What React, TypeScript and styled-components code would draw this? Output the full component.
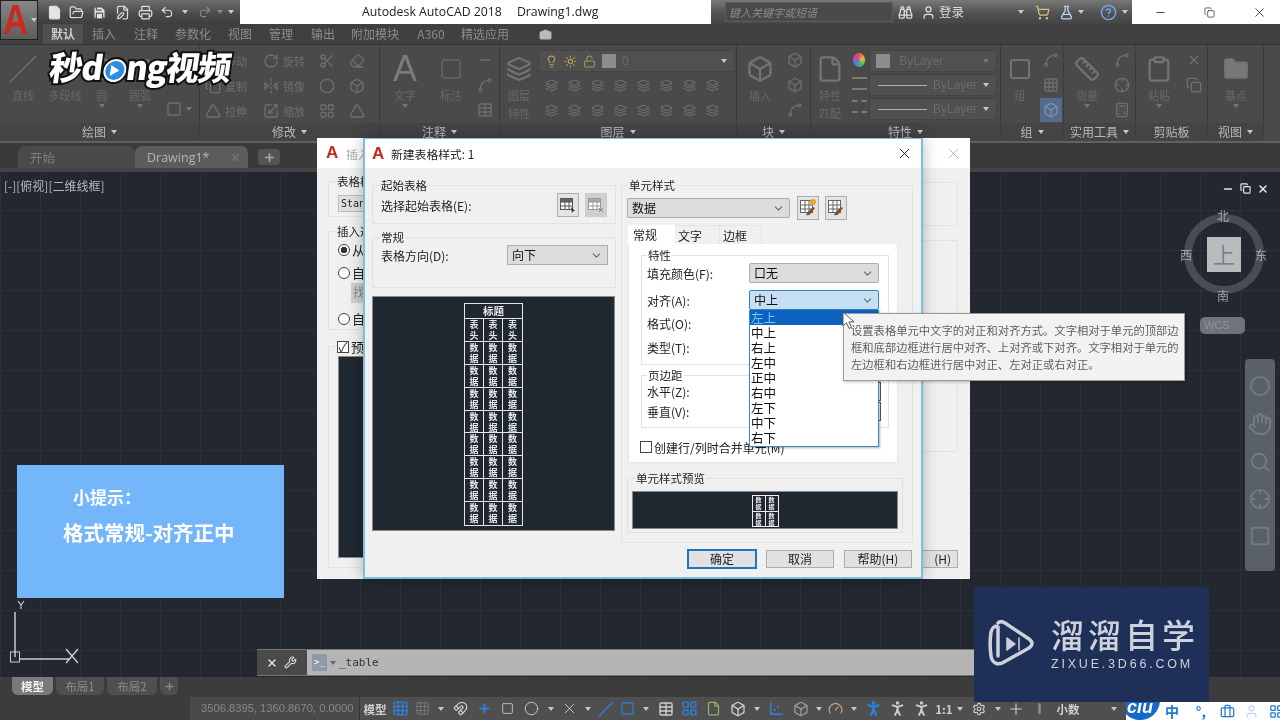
import React from 'react';
import styled, { createGlobalStyle } from 'styled-components';
import {
  File, FolderOpen, Save, FilePen, Printer, Undo2, Redo2, Binoculars, User, ShoppingCart, FlaskConical, CircleHelp,
  Minus, Copy, X, Plus, Camera, Move, RotateCw, Scissors, Eraser, FlipHorizontal2, Scaling, LayoutGrid, Triangle,
  Layers, Lightbulb, Sun, LockOpen, Square, Table, Box, Settings, Hand, Search, Wrench, Circle, Spline, Grid3x3,
  Magnet, Gauge, Axis3d, PersonStanding, Briefcase, Clipboard, Folder, Ruler, Crosshair, Calculator, Slash, ChevronDown,
} from 'lucide-react';

const CJK = `"Noto Sans CJK SC", "Liberation Sans", sans-serif`;
const Global = createGlobalStyle`
  html, body { margin: 0; padding: 0; background: #222730; }
  * { box-sizing: border-box; }
`;

const Screen = styled.div`
  position: relative; width: 1280px; height: 720px; overflow: hidden; display: flex; flex-direction: column;
  background: #3c3c3c; font-family: ${CJK}; filter: blur(0.35px);
`;

/* ---------- title bar ---------- */
const TitleBar = styled.div`display: flex; height: 24px; background: #fff; flex: none;`;
const Qat = styled.div`
  width: 240px; display: flex; align-items: center; padding-left: 43px;
  background: linear-gradient(#6d6d6d, #4a4a4a 60%, #3e3e3e); color: #dcdcdc;
`;
const QatSlot = styled.span<{ $w: number }>`width: ${p => p.$w}px; flex: none; display: flex; justify-content: center; align-items: center;`;
const Arrow = styled.span<{ $c?: string }>`
  display: inline-block; width: 0; height: 0; border-left: 3px solid transparent; border-right: 3px solid transparent;
  border-top: 4px solid ${p => p.$c || '#c9c9c9'};
`;
const AppButton = styled.div`
  position: absolute; left: 0; top: 0; width: 38px; height: 40px; z-index: 3; overflow: hidden;
  background: linear-gradient(#868686, #5d5d5d); border: 1px solid #222; display: flex; align-items: center; padding-left: 2px; gap: 1px;
`;
const AppLetter = styled.span`font: 700 42px/40px "Liberation Sans", sans-serif; color: #c92a1e; transform: scaleX(0.82); transform-origin: left; width: 27px;`;
const DocTitle = styled.div`
  width: 471px; padding-left: 122px; display: flex; gap: 15px; font: 12.3px/24px "Open Sans", ${CJK}; color: #222; white-space: nowrap;
`;
const SearchZone = styled.div`
  width: 421px; display: flex; align-items: center; color: #ddd; font-size: 12px;
  background: linear-gradient(#777, #525252 55%, #444);
`;
const SearchField = styled.div`
  margin-left: 14px; width: 168px; flex: none; height: 20px; background: #4a4a4a; color: #8b8b8b; font: italic 11px/18px ${CJK}; padding-left: 3px;
  border: 1px solid #5d5d5d; white-space: nowrap; overflow: hidden;
`;
const LoginText = styled.span`color: #dadada; font-size: 12.5px; line-height: 24px; width: 26px; flex: none; white-space: nowrap;`;
const WinControls = styled.div`flex: 1; display: flex; color: #222;`;
const WinBtn = styled.span`flex: 1; display: flex; align-items: center; justify-content: center; padding-left: 8px;`;

/* ---------- ribbon ---------- */
const RibbonTabs = styled.div`height: 20px; flex: none; background: #404040; display: flex; padding-left: 43px; color: #8d8d8d; font-size: 12px; line-height: 20px;`;
const RibbonTab = styled.span<{ $w: number; $on?: boolean }>`
  width: ${p => p.$w}px; flex: none; text-align: center; white-space: nowrap;
  ${p => p.$on ? 'background:#505050;color:#cdcdcd;font-weight:700;' : ''}
`;
const Ribbon = styled.div`height: 99px; flex: none; display: flex; background: #4a4a4a; border-bottom: 2px solid #616161; border-top: 1px solid #333;`;
const Panel = styled.div<{ $w: number }>`
  width: ${p => p.$w}px; flex: none; display: flex; flex-direction: column; border-right: 1px solid #3c3c3c; color: #6e6e6e;
`;
const PanelBody = styled.div`height: 78px; display: flex; flex: none;`;
const PanelFoot = styled.div`
  flex: 1; background: #444; color: #b9b9b9; font-size: 12px; display: flex; align-items: center; justify-content: center; gap: 5px; line-height: 18px;
`;
const BigBox = styled.div<{ $w: number }>`
  width: ${p => p.$w}px; flex: none; display: flex; flex-direction: column; align-items: center; padding-top: 8px; font-size: 11px; line-height: 18px; color: #696969;
`;
const BigIcon = styled.div`height: 31px; display: flex; align-items: center; justify-content: center; margin-bottom: 2px; color: #737373;`;
const BigLetter = styled.span`font: 36px/31px "Liberation Sans", sans-serif; color: #7b7b7b;`;
const Stack = styled.div<{ $w: number; $pt?: number }>`
  width: ${p => p.$w}px; flex: none; display: flex; flex-direction: column; align-items: center; gap: 7px; padding-top: ${p => p.$pt ?? 6}px; color: #6f6f6f;
`;
const Cell18 = styled.span<{ $on?: boolean }>`
  height: 18px; display: flex; align-items: center; gap: 4px; font-size: 11px; white-space: nowrap;
  ${p => p.$on ? 'background:#566b8c;outline:3px solid #566b8c;color:#7e90ab;' : ''}
`;
const ToolGrid = styled.div<{ $c: string }>`display: grid; grid-template-columns: ${p => p.$c}; grid-auto-rows: 25px; padding-top: 3px; align-items: center; justify-items: start; color: #6f6f6f; padding-left: 5px;`;
const LayerSide = styled.div`flex: 1; display: flex; flex-direction: column; padding-top: 5px;`;
const RibbonCombo = styled.div<{ $w?: number }>`
  width: ${p => p.$w ? p.$w + 'px' : '100%'}; height: 22px; background: #505050; border: 1px solid #454545; display: flex; align-items: center; gap: 6px;
  padding: 0 7px 0 6px; font-size: 12px; color: #6b6b6b; font-family: "Liberation Sans", sans-serif;
`;
const ColorCell = styled.span`width: 14px; height: 14px; background: #8d8d8d; flex: none;`;
const ComboEnd = styled.span`margin-left: auto; display: flex;`;
const LineSample = styled.span`flex: 1; height: 1px; background: #b0b0b0; max-width: 58px; margin-left: 2px;`;
const IconRow = styled.div`display: flex; padding-left: 2px; gap: 0; color: #6f6f6f; height: 24px; margin-top: 1px; align-items: center;`;
const Slot23 = styled.span`width: 23px; display: flex; justify-content: center;`;
const Wheel = styled.span`width: 12px; height: 14px; border-radius: 50%; background: conic-gradient(#e35151, #e8c13a, #4cc25c, #4a7fd8, #b04ccc, #e35151);`;
const LinesGlyph = styled.span<{ $dash?: boolean }>`
  width: 15px; height: 13px; border-top: 2px ${p => p.$dash ? 'dashed' : 'solid'} #7a7a7a; border-bottom: 2px ${p => p.$dash ? 'dashed' : 'solid'} #7a7a7a;
  position: relative; display: block;
`;
const PropCol = styled.div`width: 128px; display: flex; flex-direction: column; gap: 2px; padding-top: 5px;`;
const SwatchCol = styled.div`width: 20px; display: flex; flex-direction: column; align-items: center; gap: 10px; padding-top: 8px;`;

/* ---------- file tabs ---------- */
const FileTabs = styled.div`height: 29px; flex: none; background: #3a3a3a; display: flex; align-items: flex-end; padding-left: 18px; border-bottom: 4px solid #444;`;
const FileTab = styled.div<{ $w: number; $on?: boolean }>`
  width: ${p => p.$w}px; height: 22px; border-radius: 7px 7px 0 0; display: flex; align-items: center; justify-content: space-between;
  padding: 0 7px 0 12px; font: 12.5px "Open Sans", ${CJK}; color: ${p => p.$on ? '#b5b5b5' : '#7f7f7f'};
  background: ${p => p.$on ? '#5c5c5c' : '#4a4a4a'};
`;
const AddTab = styled.div`width: 22px; height: 16px; margin: 0 0 3px 10px; border-radius: 4px; background: #555; color: #aaa; display: flex; align-items: center; justify-content: center;`;

/* ---------- canvas ---------- */
const Canvas = styled.div`
  position: relative; flex: 1; background-color: #222730;
  background-image:
    linear-gradient(#2c323b 1px, transparent 1px), linear-gradient(90deg, #2c323b 1px, transparent 1px);
  background-size: 40px 40px; background-position: 0 -2px;
`;
const ViewLabel = styled.div`position: absolute; left: 4px; top: 6px; font-size: 12px; line-height: 16px; color: #b5b9bf;`;
const VpControls = styled.div`position: absolute; left: 1222px; top: 11px; display: flex; gap: 6px; color: #e8e8e8;`;
const CubeRing = styled.div`position: absolute; left: 1184px; top: 42px; width: 80px; height: 80px; border-radius: 50%; border: 8px solid #474c55;`;
const CubeFace = styled.div`
  position: absolute; left: 1207px; top: 65px; width: 34px; height: 35px; background: #b9bcbf; color: #7e8287;
  font-size: 22px; line-height: 33px; text-align: center;
`;
const Compass = styled.span<{ $x: number; $y: number }>`position: absolute; left: ${p => p.$x}px; top: ${p => p.$y}px; font-size: 12px; line-height: 14px; color: #a2a6ac;`;
const WcsPill = styled.div`
  position: absolute; left: 1200px; top: 145px; width: 45px; height: 17px; border-radius: 5px; background: #6e737c; color: #8f949c;
  font: 11px/17px "Liberation Sans", sans-serif; padding-left: 4px;
`;
const NavBar = styled.div`
  position: absolute; left: 1245px; top: 187px; width: 30px; height: 212px; background: #5a606a; border-radius: 4px; color: #747a84;
  display: flex; flex-direction: column; align-items: center; gap: 15px; padding-top: 16px;
`;
const Hint = styled.div`
  position: absolute; left: 17px; top: 293px; width: 267px; height: 133px; background: #73b6fa; color: #fff; font-weight: 700;
  display: flex; flex-direction: column; font-family: "Noto Sans CJK SC", serif;
`;
const HintSmall = styled.div`margin: 20px 0 0 56px; font-size: 17px; line-height: 24px;`;
const HintBig = styled.div`margin: 11px 0 0 46px; font-size: 20.5px; line-height: 24px; white-space: nowrap;`;
const Ucs = styled.svg`position: absolute; left: 8px; top: 425px;`;
const CmdLine = styled.div`
  position: absolute; left: 257px; top: 477px; width: 740px; height: 27px; display: flex; border-top: 1px solid #777; border-bottom: 1px solid #777;
`;
const CmdTools = styled.div`width: 50px; background: #4a4a4a; display: flex; align-items: center; padding-left: 9px; gap: 6px; color: #ddd;`;
const CmdField = styled.div`flex: 1; background: #b5b5b5; display: flex; align-items: center; padding-left: 5px; gap: 3px; color: #333; font: 11px "DejaVu Sans Mono", monospace;`;
const CmdPrompt = styled.span`width: 15px; height: 17px; background: #8f9aa8; color: #fff; font-size: 9px; line-height: 16px; text-align: center;`;

/* ---------- bottom ---------- */
const LayoutTabs = styled.div`height: 20px; flex: none; background: #3c3c3c; display: flex; padding-left: 12px; gap: 3px; font-size: 11.5px;`;
const LayoutTab = styled.div<{ $w: number; $on?: boolean }>`
  width: ${p => p.$w}px; height: 18px; display: flex; justify-content: center; align-items: center; border-radius: 0 0 6px 6px;
  background: ${p => p.$on ? '#7a7a7a' : '#4f4f4f'}; color: ${p => p.$on ? '#f0f0f0' : '#8c8c8c'}; font-weight: ${p => p.$on ? 700 : 400};
`;
const StatusBar = styled.div`height: 23px; flex: none; display: flex; padding-left: 190px; background: #3c3c3c;`;
const Coords = styled.div`width: 172px; background: #4a4a4a; color: #888; font: 11.2px/23px "Liberation Sans", sans-serif; padding-left: 11px; white-space: nowrap; border-right: 1px solid #333;`;
const StatusCluster = styled.div`flex: 1; display: flex; align-items: center; background: #4f4f4f; height: 100%;`;
const StatusItem = styled.span<{ $w: number; $c?: string }>`
  width: ${p => p.$w}px; flex: none; display: flex; align-items: center; justify-content: center; color: ${p => p.$c || '#cfcfcf'}; font-size: 11.5px; font-weight: 700; white-space: nowrap;
`;
const Tray = styled.div`width: 156px; background: #fff; margin-top: 5px; height: 18px; overflow: hidden; display: flex; align-items: center; color: #1e78d8;`;
const TrayBadge = styled.span`
  width: 40px; height: 40px; margin: -22px 0 0 -6px; align-self: flex-start; flex: none; border-radius: 50%; background: #1668c9; color: #fff; font: italic 700 18px/54px "Liberation Sans", sans-serif; text-align: center;
`;
const TrayText = styled.span<{ $w: number }>`width: ${p => p.$w}px; flex: none; display: flex; justify-content: center; font-weight: 700; font-size: 14px; line-height: 18px;`;

/* ---------- dialogs ---------- */
const Dialog = styled.div<{ $x: number; $w: number; $front?: boolean }>`
  position: absolute; left: ${p => p.$x}px; top: 138px; width: ${p => p.$w}px; height: 441px; background: #f0f0f0; display: flex; flex-direction: column;
  color: #222; font-size: 12px;
  ${p => p.$front ? 'border:2px solid #7fbddc; border-top-width:1px; box-shadow:0 0 14px rgba(0,0,0,.28);' : ''}
`;
const DlgTitle = styled.div<{ $dim?: boolean }>`
  height: ${p => p.$dim ? 30 : 29}px; flex: none; background: #fff; display: flex; align-items: center; padding: ${p => p.$dim ? '0 8px 0 9px' : '0 8px 0 7px'}; gap: ${p => p.$dim ? 5 : 4}px; font-size: 11.8px; color: ${p => p.$dim ? '#aaa' : '#222'};
`;
const DlgLogo = styled.span`font: 700 17px/20px "Liberation Sans", sans-serif; color: #c8281e; width: 15px;`;
const DlgClose = styled.span<{ $dim?: boolean }>`margin-left: auto; display: flex; color: ${p => p.$dim ? '#aaa' : '#222'};`;
const DlgBody = styled.div`display: flex; flex: none; justify-content: space-between;`;
const Field = styled.fieldset<{ $w?: number; $h: number; $ml?: number; $mt?: number; $pad?: string }>`
  margin: ${p => p.$mt ?? 0}px 0 0 ${p => p.$ml ?? 0}px; padding: ${p => p.$pad || '0'}; min-width: 0; flex: none;
  width: ${p => p.$w ? p.$w + 'px' : 'auto'}; height: ${p => p.$h}px; border: 1px solid #e1e1e1; display: block;
`;
const Legend = styled.legend<{ $ml?: number }>`padding: 0 1px; margin-left: ${p => p.$ml ?? 5}px; font-size: 11.5px; line-height: 14px; height: 14px; color: #222; white-space: nowrap;`;
const Col = styled.div<{ $w: number; $ml?: number; $mr?: number }>`width: ${p => p.$w}px; flex: none; margin: 0 ${p => p.$mr ?? 0}px 0 ${p => p.$ml ?? 0}px; display: flex; flex-direction: column;`;
const Row = styled.div<{ $h?: number; $mb?: number; $mt?: number; $start?: boolean }>`
  display: flex; align-items: center; justify-content: ${p => p.$start ? 'flex-start' : 'space-between'}; gap: ${p => p.$start ? 7 : 0}px;
  height: ${p => p.$h ?? 24}px; margin: ${p => p.$mt ?? 0}px 0 ${p => p.$mb ?? 0}px; white-space: nowrap;
`;
const IconBtns = styled.div`display: flex; gap: 6px;`;
const IconBtn = styled.span<{ $dim?: boolean }>`
  width: 22px; height: 24px; border: 1px solid ${p => p.$dim ? '#ccc' : '#adadad'}; background: ${p => p.$dim ? '#cfcfcf' : '#e4e4e4'};
  display: flex; align-items: center; justify-content: center;
`;
const SelectWrap = styled.div<{ $w: number }>`position: relative; width: ${p => p.$w}px; flex: none;`;
const Select = styled.div<{ $open?: boolean; $flat?: boolean }>`
  height: 20px; display: flex; align-items: center; justify-content: space-between; padding: 0 4px; line-height: 18px; color: #111;
  background: ${p => p.$open ? '#c6dff2' : '#dcdcdc'}; border: 1px solid ${p => p.$open ? '#2f84c6' : '#adadad'};
  border-radius: ${p => p.$flat ? 0 : 2}px;
`;
const MarginInput = styled.div`width: 132px; height: 19px; margin-right: -2px; border: 1px solid #555; border-left: none; background: #fff; flex: none;`;
const Tabs = styled.div`display: flex; margin: 5px 0 0 1px; height: 19px; position: relative;`;
const Tab = styled.span<{ $w: number; $on?: boolean }>`
  width: ${p => p.$w}px; padding-left: ${p => p.$on ? 5 : 3}px; line-height: 19px; background: ${p => p.$on ? '#fff' : '#f0f0f0'};
  ${p => p.$on ? '' : 'border:1px solid #e4e4e4; border-bottom:none; border-left:none;'}
`;
const TabBody = styled.div`
  width: 270px; height: 219px; margin-left: 1px; background: #fff; display: flex; flex-direction: column; padding: 4px 0 0 12px; border: 1px solid #e6e6e6; border-top: none;
`;
const FormPad = styled.div`padding: 0 9px 0 5px;`;
const Preview = styled.div<{ $h: number; $w?: number; $mt?: number }>`
  height: ${p => p.$h}px; ${p => p.$w ? `width:${p.$w}px;` : ''} margin-top: ${p => p.$mt ?? 0}px; background: #1f2731; border: 1px solid #8a8a8a; display: flex; justify-content: center; flex: none;
`;
const BigTable = styled.div`
  margin-top: 6px; width: 59px; height: 223px; display: grid; grid-template-columns: repeat(3, 1fr); grid-template-rows: 15px repeat(9, 1fr);
  border: 1px solid #e6e6e6; color: #e8e8e8; font-weight: 700;
`;
const HeadCell = styled.div`grid-column: 1 / span 3; border-bottom: 1px solid #e6e6e6; text-align: center; font-size: 10.5px; line-height: 14px;`;
const DataCell = styled.div`
  font-size: 9px; line-height: 11px; text-align: center; border-right: 1px solid #e6e6e6; border-bottom: 1px solid #e6e6e6; padding-top: 0; overflow: hidden;
  &:nth-child(3n+4) { border-right: none; }
  &:nth-last-child(-n+3) { border-bottom: none; }
`;
const MiniTable = styled.div`
  margin-top: 3px; width: 27px; height: 32px; display: grid; grid-template-columns: 1fr 1fr; grid-template-rows: 1fr 1fr; gap: 1px; background: #eee; border: 1px solid #eee;
`;
const MiniCell = styled.div`background: #1f2731; color: #eee; font-size: 6px; line-height: 7px; text-align: center; font-weight: 700;`;
const CheckRow = styled.div`display: flex; align-items: center; gap: 2px; height: 16px; margin: 11px 0 0 -1px; white-space: nowrap; font-size: 12px;`;
const Check = styled.span`width: 12px; height: 12px; border: 1px solid #444; background: #fff; flex: none; display: flex; align-items: center; justify-content: center; color: #333;`;
const Radio = styled.span<{ $on?: boolean }>`
  width: 12px; height: 12px; border-radius: 50%; border: 1px solid #444; background: ${p => p.$on ? 'radial-gradient(#333 0 3px, #fff 3.5px)' : '#fff'}; flex: none;
`;
const Drop = styled.div`
  position: absolute; left: 0; top: 100%; width: 130px; height: 137px; background: #fff; border: 1px solid #3a8ac8; border-top: none; box-shadow: 1px 1px 2px rgba(0,0,0,.3);
  z-index: 4; display: flex; flex-direction: column; font-size: 12.5px; line-height: 15px; overflow: hidden;
`;
const DropItem = styled.div<{ $on?: boolean }>`height: 15px; flex: none; padding-left: 1px; background: ${p => p.$on ? '#0b62c0' : 'transparent'}; color: ${p => p.$on ? '#7cc4f5' : '#111'};`;
const Footer = styled.div`display: flex; justify-content: flex-end; gap: 10px; margin-top: 7px; padding-right: 9px;`;
const Btn = styled.span<{ $on?: boolean }>`
  width: 68px; height: 18px; text-align: center; line-height: 16px; font-size: 12px; background: #e1e1e1; border: 1px solid ${p => p.$on ? '#1e76bf' : '#adadad'};
  ${p => p.$on ? 'outline:1px solid #1e76bf;' : ''}
`;
const BackLeft = styled.div`width: 150px; padding: 6px 0 0 11px; display: flex; flex-direction: column; overflow: hidden; flex: none;`;
const BackRow = styled.div<{ $mt: number; $ml?: number }>`display: flex; align-items: center; gap: 2px; margin: ${p => p.$mt}px 0 0 ${p => p.$ml ?? 9}px; white-space: nowrap; height: 16px; font-size: 13px; line-height: 16px;`;
const BackStan = styled.div`margin: 7px 0 0 9px; width: 60px; height: 17px; background: #e1e1e1; border: 1px solid #bbb; font: 10px/15px "DejaVu Sans Mono", monospace; padding-left: 2px; overflow: hidden;`;
const BackFind = styled.div`margin: 2px 0 0 22px; width: 60px; height: 20px; background: #cfcfcf; color: #888; padding-left: 2px; line-height: 18px;`;
const BackDark = styled.div`margin: 3px 0 0 9px; width: 60px; height: 202px; background: #1f2731; border: 1px solid #8a8a8a;`;
const BackRight = styled.div`width: 47px; flex: none; display: flex; flex-direction: column; padding-top: 14px; align-items: flex-end;`;
const GhostBox = styled.div<{ $h: number; $mt: number }>`width: 40px; height: ${p => p.$h}px; margin: ${p => p.$mt}px 12px 0 0; border: 1px solid #e3e3e3; border-left: none;`;
const GhostBtn = styled.div`width: 40px; height: 18px; margin: 98px 12px 0 0; background: #e1e1e1; border: 1px solid #adadad; text-align: right; padding-right: 6px; line-height: 16px;`;

/* ---------- overlays ---------- */
const Tooltip = styled.div`
  position: absolute; left: 843px; top: 313px; width: 342px; height: 68px; background: #f2f2f2; border: 1px solid #9a9a9a; box-shadow: 1px 1px 3px rgba(0,0,0,.25);
  padding: 8px 0 0 7px; color: #5e5e5e; font-size: 11.3px; line-height: 17px; white-space: nowrap; z-index: 6;
`;
const Cursor = styled.svg`position: absolute; left: 842px; top: 311px; z-index: 7;`;
const Brand = styled.div`
  position: absolute; left: 50px; top: 44px; display: flex; align-items: center; z-index: 8; height: 44px; transform: skewX(-8deg);
  font: 800 33px/44px "Noto Sans CJK SC", sans-serif; color: #fff; letter-spacing: -1px;
  -webkit-text-stroke: 4px #111; paint-order: stroke fill;
`;
const BrandDisc = styled.span`
  width: 23px; height: 23px; margin: 8px 0 0 1px; border-radius: 50%; background: #2f8de0; border: 2px solid #fff; display: flex; align-items: center; justify-content: center; outline: 2px solid #111;
`;
const Zixue = styled.div`
  position: absolute; left: 974px; top: 587px; width: 235px; height: 115px; background: #1f3058; z-index: 9; display: flex; align-items: center; padding: 0 0 2px 14px; gap: 18px; color: #cdd1da;
`;
const ZixueText = styled.div`display: flex; flex-direction: column; align-items: flex-start; margin-left: -1px;`;
const ZixueBig = styled.div`font-size: 33px; line-height: 38px; letter-spacing: 4px; font-weight: 500; white-space: nowrap;`;
const ZixueSmall = styled.div`font: 12.5px/16px "Liberation Sans", sans-serif; letter-spacing: 2.8px; margin-top: 3px; white-space: nowrap; font-weight: 400;`;

const Big = ({ w, icon, a, b, arrow }: { w: number; icon: React.ReactNode; a: string; b?: string; arrow?: boolean }) => (
  <BigBox $w={w}>
    <BigIcon>{icon}</BigIcon>
    <span>{a}</span>
    {b && <span>{b}</span>}
    {arrow && <Arrow $c="#777" />}
  </BigBox>
);
const S = 16;
const Chevron = () => <ChevronDown size={13} color="#666" strokeWidth={2} />;
const TableGlyph = ({ off }: { off?: boolean }) => (
  <svg width="18" height="18" viewBox="0 0 18 18" fill="none" stroke={off ? '#999' : '#555'}>
    <rect x="1.5" y="2.5" width="12" height="11" fill="#fff" />
    <path d="M1.5 6h12M1.5 10h12M6 6v7.5M10 6v7.5" />
    <path d="M1.5 2.5h12v3h-12z" fill={off ? '#aaa' : '#666'} />
    {off ? <path d="M12 12l4 4m0-4l-4 4" stroke="#888" /> : <path d="M12 11l4 4-2 .3-1 2z" fill="#333" stroke="none" />}
  </svg>
);
const BrushGlyph = ({ star }: { star?: boolean }) => (
  <svg width="20" height="20" viewBox="0 0 20 20" fill="none" stroke="#666">
    <rect x="2.5" y="2.5" width="12" height="12" fill="#fff" />
    <path d="M2.5 7h12M2.5 11h12M7 2.5v12M11 2.5v12" />
    <path d="M8 17c3 1 5-1 6-3l3-4-2-1-4 4c-1 .4-2 2-3 4z" fill="#7a5230" stroke="none" />
    {star && <circle cx="15" cy="4" r="3" fill="#f0a030" stroke="none" />}
  </svg>
);

const statusItems: { w: number; c?: string; n: React.ReactNode }[] = [
  { w: 30, n: '模型' },
  { w: 22, c: '#2f7fe0', n: <Grid3x3 size={17} /> },
  { w: 22, c: '#8c8c8c', n: <Grid3x3 size={15} strokeWidth={1} /> },
  { w: 14, n: <Arrow /> },
  { w: 26, n: <Magnet size={15} /> },
  { w: 22, c: '#2f7fe0', n: <Plus size={15} strokeWidth={3} /> },
  { w: 24, n: <Square size={13} strokeWidth={1.5} /> },
  { w: 24, n: <Circle size={15} strokeWidth={1.5} /> },
  { w: 14, n: <Arrow /> },
  { w: 24, n: <X size={17} strokeWidth={1.3} /> },
  { w: 12, n: <Arrow /> },
  { w: 24, c: '#2f7fe0', n: <Slash size={16} /> },
  { w: 20, c: '#2f7fe0', n: <Square size={15} /> },
  { w: 16, n: <Arrow /> },
  { w: 24, n: <Table size={16} /> },
  { w: 24, c: '#2f7fe0', n: <LayoutGrid size={17} /> },
  { w: 24, c: '#8bb56b', n: <File size={15} /> },
  { w: 24, n: <Box size={16} /> },
  { w: 14, n: <Arrow /> },
  { w: 26, c: '#2f7fe0', n: <Axis3d size={17} /> },
  { w: 22, c: '#9a9a9a', n: <Box size={16} /> },
  { w: 14, n: <Arrow /> },
  { w: 20, c: '#c0a080', n: <Gauge size={15} /> },
  { w: 16, n: <Arrow /> },
  { w: 24, c: '#2f7fe0', n: <PersonStanding size={19} strokeWidth={3} /> },
  { w: 24, n: <PersonStanding size={19} strokeWidth={2.5} /> },
  { w: 24, n: <PersonStanding size={19} strokeWidth={2.5} /> },
  { w: 20, n: '1:1' },
  { w: 12, n: <Arrow /> },
  { w: 26, n: <Settings size={14} /> },
  { w: 12, n: <Arrow /> },
  { w: 24, n: <Plus size={18} strokeWidth={1.5} /> },
  { w: 24, c: '#8c8c8c', n: <Minus size={15} style={{ transform: 'rotate(90deg)' }} strokeWidth={4} /> },
  { w: 32, n: '小数' },
  { w: 18, n: null },
  { w: 24, n: <Arrow /> },
];

const ribbonTabs: [string, number, boolean?][] = [
  ['默认', 40, true], ['插入', 42], ['注释', 42], ['参数化', 52], ['视图', 42], ['管理', 40], ['输出', 44], ['附加模块', 60], ['A360', 52], ['精选应用', 56],
];
const alignItems = ['左上', '中上', '右上', '左中', '正中', '右中', '左下', '中下', '右下'];

export default function App() {
  return (
    <Screen>
      <Global />
      <AppButton><AppLetter>A</AppLetter><Arrow /></AppButton>
      <TitleBar>
        <Qat>
          <QatSlot $w={22}><File size={15} fill="#e5e5e5" /></QatSlot>
          <QatSlot $w={23}><FolderOpen size={15} /></QatSlot>
          <QatSlot $w={23}><Save size={15} fill="#e5e5e5" color="#555" /></QatSlot>
          <QatSlot $w={23}><FilePen size={15} /></QatSlot>
          <QatSlot $w={22}><Printer size={15} /></QatSlot>
          <QatSlot $w={22}><Undo2 size={14} /></QatSlot>
          <QatSlot $w={14}><Arrow /></QatSlot>
          <QatSlot $w={26}><Redo2 size={14} color="#888" /></QatSlot>
          <QatSlot $w={4}><Arrow $c="#888" /></QatSlot>
          <QatSlot $w={18}><Arrow /></QatSlot>
        </Qat>
        <DocTitle><span>Autodesk AutoCAD 2018</span><span>Drawing1.dwg</span></DocTitle>
        <SearchZone>
          <SearchField>键入关键字或短语</SearchField>
          <QatSlot $w={24}><Binoculars size={15} /></QatSlot>
          <QatSlot $w={22}><User size={15} /></QatSlot>
          <LoginText>登录</LoginText>
          <QatSlot $w={49} />
          <QatSlot $w={14}><Arrow /></QatSlot>
          <QatSlot $w={28}><ShoppingCart size={15} color="#d9c27a" /></QatSlot>
          <QatSlot $w={20}><FlaskConical size={15} color="#b9d2f2" /></QatSlot>
          <QatSlot $w={10}><Arrow /></QatSlot>
          <QatSlot $w={8} />
          <QatSlot $w={28}><CircleHelp size={17} color="#79a8e6" /></QatSlot>
          <QatSlot $w={6}><Arrow /></QatSlot>
        </SearchZone>
        <WinControls>
          <WinBtn><Minus size={13} strokeWidth={1.5} /></WinBtn>
          <WinBtn><Copy size={11} strokeWidth={1.5} /></WinBtn>
          <WinBtn><X size={15} strokeWidth={1.3} /></WinBtn>
        </WinControls>
      </TitleBar>

      <RibbonTabs>
        {ribbonTabs.map(([t, w, on]) => <RibbonTab key={t} $w={w} $on={on}>{t}</RibbonTab>)}
        <QatSlot $w={64}><Camera size={13} color="#bbb" fill="#bbb" /></QatSlot>
      </RibbonTabs>

      <Ribbon>
        <Panel $w={200}>
          <PanelBody>
            <Big w={46} icon={<Slash size={30} strokeWidth={1} />} a="直线" />
            <Big w={38} icon={<Spline size={24} />} a="多段线" />
            <Big w={36} icon={<Circle size={24} />} a="圆" arrow />
            <Big w={40} icon={<Spline size={24} />} a="圆弧" arrow />
            <Stack $w={38} $pt={55}><Cell18><Square size={S} /><Arrow $c="#777" /></Cell18></Stack>
          </PanelBody>
          <PanelFoot>绘图 <Arrow /></PanelFoot>
        </Panel>
        <Panel $w={180}>
          <PanelBody>
            <ToolGrid $c="58px 56px 30px 30px">
              <Cell18><Move size={S} />移动</Cell18><Cell18><RotateCw size={S} />旋转</Cell18><Cell18><Scissors size={S} /></Cell18><Cell18><Eraser size={S} /></Cell18>
              <Cell18><Copy size={S} />复制</Cell18><Cell18><FlipHorizontal2 size={S} />镜像</Cell18><Cell18><Circle size={S} /></Cell18><Cell18><Box size={S} /></Cell18>
              <Cell18><Triangle size={S} />拉伸</Cell18><Cell18><Scaling size={S} />缩放</Cell18><Cell18><LayoutGrid size={S} /></Cell18><Cell18><Triangle size={S} /></Cell18>
            </ToolGrid>
          </PanelBody>
          <PanelFoot>修改 <Arrow /></PanelFoot>
        </Panel>
        <Panel $w={120}>
          <PanelBody>
            <Big w={50} icon={<BigLetter>A</BigLetter>} a="文字" arrow />
            <Big w={42} icon={<Square size={24} strokeWidth={1} />} a="标注" />
            <Stack $w={26}><Cell18><Minus size={S} /></Cell18><Cell18><Spline size={S} /></Cell18><Cell18><Table size={S} /></Cell18></Stack>
          </PanelBody>
          <PanelFoot>注释 <Arrow /></PanelFoot>
        </Panel>
        <Panel $w={237}>
          <PanelBody>
            <Big w={38} icon={<Layers size={26} />} a="图层" b="特性" />
            <LayerSide>
              <RibbonCombo $w={197}>
                <Lightbulb size={13} color="#b8a256" /><Sun size={13} color="#b8a256" /><LockOpen size={13} color="#a8974e" /><ColorCell />0<ComboEnd><Arrow /></ComboEnd>
              </RibbonCombo>
              <IconRow>{[0, 1, 2, 3, 4, 5, 6, 7].map(i => <Slot23 key={i}><Layers size={13} /></Slot23>)}</IconRow>
              <IconRow>{[0, 1, 2, 3, 4, 5, 6, 7].map(i => <Slot23 key={i}><Layers size={13} /></Slot23>)}</IconRow>
            </LayerSide>
          </PanelBody>
          <PanelFoot>图层 <Arrow /></PanelFoot>
        </Panel>
        <Panel $w={74}>
          <PanelBody>
            <Big w={46} icon={<Box size={28} />} a="插入" />
            <Stack $w={24}><Cell18><Box size={S} /></Cell18><Cell18><Box size={S} /></Cell18><Cell18><Spline size={S} /></Cell18></Stack>
          </PanelBody>
          <PanelFoot>块 <Arrow /></PanelFoot>
        </Panel>
        <Panel $w={190}>
          <PanelBody>
            <Big w={38} icon={<File size={28} />} a="特性" b="匹配" />
            <SwatchCol><Wheel /><LinesGlyph /><LinesGlyph $dash /></SwatchCol>
            <PropCol>
              <RibbonCombo><ColorCell /><span>&nbsp;ByLayer</span><ComboEnd><Arrow $c="#777" /></ComboEnd></RibbonCombo>
              <RibbonCombo><LineSample /><span>ByLayer</span><ComboEnd><Arrow /></ComboEnd></RibbonCombo>
              <RibbonCombo><LineSample /><span>ByLayer</span><ComboEnd><Arrow /></ComboEnd></RibbonCombo>
            </PropCol>
          </PanelBody>
          <PanelFoot>特性 <Arrow /></PanelFoot>
        </Panel>
        <Panel $w={63}>
          <PanelBody>
            <Big w={38} icon={<Square size={24} />} a="组" />
            <Stack $w={24}><Cell18><Spline size={S} /></Cell18><Cell18><Grid3x3 size={S} /></Cell18><Cell18 $on><Box size={S} /></Cell18></Stack>
          </PanelBody>
          <PanelFoot>组 <Arrow /></PanelFoot>
        </Panel>
        <Panel $w={72}>
          <PanelBody>
            <Big w={46} icon={<Ruler size={26} />} a="测量" arrow />
            <Stack $w={24}><Cell18><Spline size={S} /></Cell18><Cell18><Crosshair size={S} /></Cell18><Cell18><Calculator size={S} /></Cell18></Stack>
          </PanelBody>
          <PanelFoot>实用工具 <Arrow /></PanelFoot>
        </Panel>
        <Panel $w={72}>
          <PanelBody>
            <Big w={46} icon={<Clipboard size={28} />} a="粘贴" arrow />
            <Stack $w={24}><Cell18><X size={S} /></Cell18><Cell18><Copy size={S} /></Cell18></Stack>
          </PanelBody>
          <PanelFoot>剪贴板</PanelFoot>
        </Panel>
        <Panel $w={56}>
          <PanelBody>
            <Big w={56} icon={<Folder size={26} fill="#777" />} a="基点" arrow />
          </PanelBody>
          <PanelFoot>视图 <Arrow /></PanelFoot>
        </Panel>
      </Ribbon>

      <FileTabs>
        <FileTab $w={117}>开始</FileTab>
        <FileTab $w={113} $on>Drawing1*<X size={11} color="#777" strokeWidth={3} /></FileTab>
        <AddTab><Plus size={13} strokeWidth={3} /></AddTab>
      </FileTabs>

      <Canvas>
        <ViewLabel>[-][俯视][二维线框]</ViewLabel>
        <VpControls>
          <Minus size={12} strokeWidth={3} /><Copy size={11} strokeWidth={2.5} /><X size={12} strokeWidth={3} />
        </VpControls>
        <CubeRing />
        <CubeFace>上</CubeFace>
        <Compass $x={1217} $y={37}>北</Compass>
        <Compass $x={1217} $y={117}>南</Compass>
        <Compass $x={1180} $y={76}>西</Compass>
        <Compass $x={1255} $y={76}>东</Compass>
        <WcsPill>WCS</WcsPill>
        <NavBar>
          <Circle size={22} /><Hand size={24} /><Search size={22} /><Crosshair size={22} /><Square size={22} />
        </NavBar>
        <Hint>
          <HintSmall>小提示：</HintSmall>
          <HintBig>格式常规-对齐正中</HintBig>
        </Hint>
        <Ucs width="72" height="80" viewBox="0 0 72 80" fill="none" stroke="#c9ccd0">
          <path d="M7 15V60M12 62h50" strokeWidth="1.5" />
          <path d="M10 4l3 4 3-4M13 8v4" strokeWidth="1.2" />
          <rect x="2.5" y="55" width="9" height="10" />
          <path d="M58 52l12 14m0-14L58 66" strokeWidth="1.4" />
        </Ucs>
        <CmdLine>
          <CmdTools><X size={12} strokeWidth={3} /><Wrench size={13} /></CmdTools>
          <CmdField><CmdPrompt>&gt;_</CmdPrompt><Arrow $c="#666" />_table</CmdField>
        </CmdLine>
      </Canvas>

      <LayoutTabs>
        <LayoutTab $w={41} $on>模型</LayoutTab>
        <LayoutTab $w={48}>布局1</LayoutTab>
        <LayoutTab $w={50}>布局2</LayoutTab>
        <LayoutTab $w={18}><Plus size={11} strokeWidth={3} /></LayoutTab>
      </LayoutTabs>
      <StatusBar>
        <Coords>3506.8395, 1360.8670, 0.0000</Coords>
        <StatusCluster>
          {statusItems.map((it, i) => <StatusItem key={i} $w={it.w} $c={it.c}>{it.n}</StatusItem>)}
        </StatusCluster>
        <Tray>
          <TrayBadge>ciu</TrayBadge>
          <TrayText $w={24}>中</TrayText>
          <TrayText $w={34}>°,</TrayText>
          <TrayText $w={20}><Briefcase size={15} /></TrayText>
          <TrayText $w={28}><User size={15} color="#c4d6ee" /></TrayText>
          <TrayText $w={22}><LayoutGrid size={15} /></TrayText>
        </Tray>
      </StatusBar>

      {/* dialog behind */}
      <Dialog $x={317} $w={653}>
        <DlgTitle $dim><DlgLogo>A</DlgLogo>插入表格<DlgClose $dim><X size={17} strokeWidth={1.2} /></DlgClose></DlgTitle>
        <DlgBody>
          <BackLeft>
            <Field $h={43}>
              <Legend $ml={7}>表格样式</Legend>
              <BackStan>Standard</BackStan>
            </Field>
            <Field $h={106} $mt={7}>
              <Legend $ml={7}>插入选项</Legend>
              <BackRow $mt={4}><Radio $on />从</BackRow>
              <BackRow $mt={7}><Radio />自</BackRow>
              <BackFind>找</BackFind>
              <BackRow $mt={8}><Radio />自</BackRow>
            </Field>
            <Field $h={229} $mt={9}>
              <Legend $ml={7}><BackRow $mt={0} $ml={0}><Check>✓</Check>预览</BackRow></Legend>
              <BackDark />
            </Field>
          </BackLeft>
          <BackRight>
            <GhostBox $h={44} $mt={0} />
            <GhostBox $h={212} $mt={14} />
            <GhostBtn>(H)</GhostBtn>
          </BackRight>
        </DlgBody>
      </Dialog>

      {/* front dialog */}
      <Dialog $x={363} $w={560} $front>
        <DlgTitle><DlgLogo>A</DlgLogo>新建表格样式: 1<DlgClose><X size={17} strokeWidth={1.4} /></DlgClose></DlgTitle>
        <DlgBody>
          <Col $w={244} $ml={7}>
            <Field $h={46} $mt={10} $pad="0 8px">
              <Legend $ml={-1}>起始表格</Legend>
              <Row $mt={1}>
                <span>选择起始表格(E):</span>
                <IconBtns>
                  <IconBtn><TableGlyph /></IconBtn>
                  <IconBtn $dim><TableGlyph off /></IconBtn>
                </IconBtns>
              </Row>
            </Field>
            <Field $h={58} $mt={6} $pad="0 7px 0 8px">
              <Legend $ml={-1}>常规</Legend>
              <Row $h={22}>
                <span>表格方向(D):</span>
                <SelectWrap $w={101}><Select $flat>向下<Chevron /></Select></SelectWrap>
              </Row>
            </Field>
            <Preview $h={235} $w={243} $mt={8}>
              <BigTable>
                <HeadCell>标题</HeadCell>
                {[0, 1, 2].map(i => <DataCell key={`h${i}`}>表<br />头</DataCell>)}
                {Array.from({ length: 24 }, (_, i) => <DataCell key={i}>数<br />据</DataCell>)}
              </BigTable>
            </Preview>
          </Col>
          <Col $w={292} $mr={8}>
            <Field $h={365} $mt={10} $pad="0 0 0 5px">
              <Legend $ml={1}>单元样式</Legend>
              <Row $mt={4} $start>
                <SelectWrap $w={163}><Select>数据<Chevron /></Select></SelectWrap>
                <IconBtns>
                  <IconBtn><BrushGlyph star /></IconBtn>
                  <IconBtn><BrushGlyph /></IconBtn>
                </IconBtns>
              </Row>
              <Tabs>
                <Tab $w={47} $on>常规</Tab><Tab $w={45}>文字</Tab><Tab $w={42}>边框</Tab>
              </Tabs>
              <TabBody>
                <Field $w={248} $h={117}>
                  <Legend>特性</Legend>
                  <FormPad>
                    <Row $h={22} $mb={4}>
                      <span>填充颜色(F):</span>
                      <SelectWrap $w={130}><Select>口无<Chevron /></Select></SelectWrap>
                    </Row>
                    <Row>
                      <span>对齐(A):</span>
                      <SelectWrap $w={130}>
                        <Select $open>中上<Chevron /></Select>
                        <Drop>{alignItems.map((t, i) => <DropItem key={t} $on={i === 0}>{t}</DropItem>)}</Drop>
                      </SelectWrap>
                    </Row>
                    <Row $h={23}><span>格式(O):</span></Row>
                    <Row><span>类型(T):</span></Row>
                  </FormPad>
                </Field>
                <Field $w={248} $h={60} $mt={3}>
                  <Legend>页边距</Legend>
                  <FormPad>
                    <Row $h={19}><span>水平(Z):</span><MarginInput /></Row>
                    <Row $h={21}><span>垂直(V):</span><MarginInput /></Row>
                  </FormPad>
                </Field>
                <CheckRow><Check />创建行/列时合并单元(M)</CheckRow>
              </TabBody>
              <Field $w={276} $h={62} $mt={8} $pad="0 4px">
                <Legend $ml={3}>单元样式预览</Legend>
                <Preview $h={38} $mt={6}>
                  <MiniTable>
                    {[0, 1, 2, 3].map(i => <MiniCell key={i}>数<br />据</MiniCell>)}
                  </MiniTable>
                </Preview>
              </Field>
            </Field>
          </Col>
        </DlgBody>
        <Footer><Btn $on>确定</Btn><Btn>取消</Btn><Btn>帮助(H)</Btn></Footer>
      </Dialog>

      <Tooltip>
        设置表格单元中文字的对正和对齐方式。文字相对于单元的顶部边<br />
        框和底部边框进行居中对齐、上对齐或下对齐。文字相对于单元的<br />
        左边框和右边框进行居中对正、左对正或右对正。
      </Tooltip>
      <Cursor width="14" height="19" viewBox="0 0 14 19">
        <path d="M1 1v14l3.5-3.2 2.6 5.6 2.4-1.1-2.6-5.4H12z" fill="#fff" stroke="#555" />
      </Cursor>

      <Brand>
        秒d<BrandDisc><svg width="9" height="11" viewBox="0 0 9 11"><path d="M0 0l9 5.5L0 11z" fill="#fff" /></svg></BrandDisc>ng视频
      </Brand>

      <Zixue>
        <svg width="46" height="50" viewBox="0 0 46 50" fill="none" stroke="#cdd1da" strokeWidth="3.5" strokeLinejoin="round" strokeLinecap="round">
          <path d="M10 37V8C7 6 4 9 3 13 2 20 2 30 3 37c1 7 7 10 13 6L41 29c4-3 4-6 0-9L17 4c-3-2-5-2-7 0" />
          <path d="M19 19l8 6-8 6zM31 19v12" fill="#cdd1da" strokeWidth="1.5" />
        </svg>
        <ZixueText>
          <ZixueBig>溜溜自学</ZixueBig>
          <ZixueSmall>ZIXUE.3D66.COM</ZixueSmall>
        </ZixueText>
      </Zixue>
    </Screen>
  );
}
